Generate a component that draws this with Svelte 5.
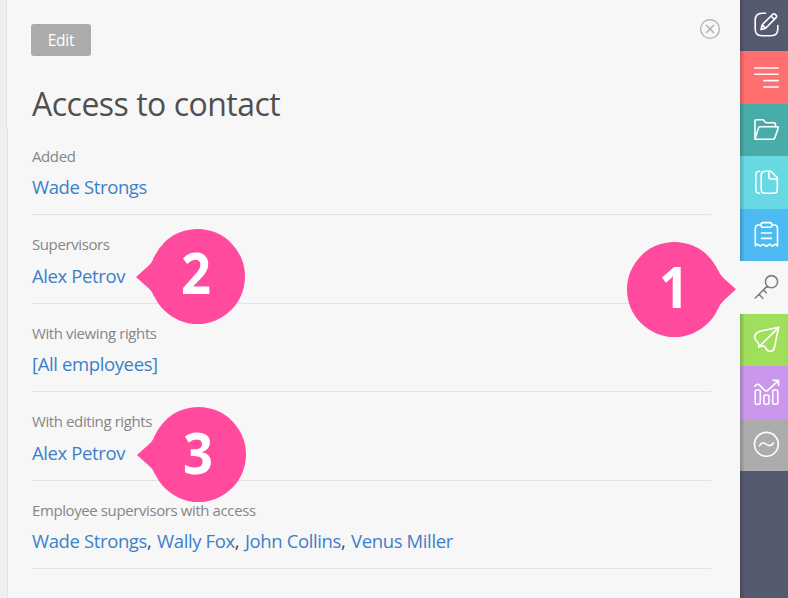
<script lang="ts">
  interface AccessRow {
    label: string;
    people: string[];
  }

  const rows: AccessRow[] = [
    { label: 'Added', people: ['Wade Strongs'] },
    { label: 'Supervisors', people: ['Alex Petrov'] },
    { label: 'With viewing rights', people: ['[All employees]'] },
    { label: 'With editing rights', people: ['Alex Petrov'] },
    {
      label: 'Employee supervisors with access',
      people: ['Wade Strongs', 'Wally Fox', 'John Collins', 'Venus Miller']
    }
  ];

  // Icon paths are drawn in a 48x52 tab
  const tabs = [
    {
      name: 'compose',
      paths: [
        'M25.5 13.2H22Q15.2 13.2 15.2 20V29Q15.2 35.7 22 35.7H31Q37.8 35.7 37.8 29V25.5',
        'M21 29.6 22.2 24.7 32.8 14.2Q34 13.2 35.3 14.4L36 15.1Q37.2 16.5 36.1 17.6L25.6 28.2ZM22.2 24.7 25.6 28.2M31 16 34.3 19.3'
      ]
    },
    { name: 'details', paths: ['M14.8 17H38.2M14.8 23.3H38.2M23.8 29.6H38.2M23.8 36H38.2'] },
    {
      name: 'folder',
      paths: [
        'M15 35V17.2Q15 15.8 16.4 15.8H22.5Q24 15.8 24.5 17.2T26.5 18.7H33.8Q35.5 18.7 35.5 20.4V22.8',
        'M15 35 18.5 24Q18.8 22.8 20 22.8H37.2Q38.6 22.8 38.2 24L34.8 34Q34.4 35.2 33.2 35.2H15.6Q15 35.2 15 34.6'
      ]
    },
    {
      name: 'copy',
      paths: [
        'M31 15.2H25Q21.2 15.2 21.2 19V33.5Q21.2 37.3 25 37.3H33.5Q37.3 37.3 37.3 33.5V21.5ZM28.8 15.2V20.5Q28.8 23 31.3 23H37',
        'M19.5 15.2Q15.8 15.4 15.8 19V33.5Q15.8 37 19.5 37.3'
      ]
    },
    {
      name: 'tasks',
      paths: [
        'M21 16H18Q15.3 16.3 15.3 19.2V36.8L17.4 35.2 20.2 37.2 23.2 35.2 26.4 37.2 29.6 35.2 32.6 37.2 35.4 35.2 37.5 36.8V19.2Q37.5 16.3 34.8 16H32',
        'M23.2 13.6H29.8Q32 13.6 32 15.9T29.8 18.3H23.2Q21 18.3 21 15.9T23.2 13.6ZM21.5 24H31.5M21.5 29.4H31.5'
      ]
    },
    {
      name: 'access',
      active: true,
      paths: [
        'M25.4 20.7A6.1 6.1 0 1 0 37.6 20.7A6.1 6.1 0 1 0 25.4 20.7M27.2 25.1 15.2 37M19 33.3 22.8 37.3M23.7 29 26.2 31.8'
      ]
    },
    {
      name: 'send',
      paths: [
        'M38.6 13.4 18.8 33V30.4Q18.8 29.2 17.4 28Q14.8 25.7 14.7 23.2Q14.6 20 18 18.2Q19.8 17 22 16.8Z',
        'M18.8 33 21.4 32.3Q25 31.4 26 34.2Q27.2 37.5 30.4 37.4Q33.5 37.3 34.4 33.5L38.6 13.4'
      ]
    },
    {
      name: 'reports',
      paths: [
        'M16.7 24H18.8Q20.3 24 20.3 25.5V36.8Q20.3 38.3 18.8 38.3H16.7Q15.2 38.3 15.2 36.8V25.5Q15.2 24 16.7 24Z',
        'M25.4 29H27.5Q29 29 29 30.5V36.8Q29 38.3 27.5 38.3H25.4Q23.9 38.3 23.9 36.8V30.5Q23.9 29 25.4 29Z',
        'M34.2 24H36.3Q37.8 24 37.8 25.5V36.8Q37.8 38.3 36.3 38.3H34.2Q32.7 38.3 32.7 36.8V25.5Q32.7 24 34.2 24Z',
        'M14.8 20.2Q17.2 17 19.5 19.2L24.8 24.3Q26.4 25.7 28 24.2L38.4 14.6M33.2 14.4H38.5V19.5'
      ]
    },
    {
      name: 'other',
      paths: [
        'M14.5 25.3A11.9 11.9 0 1 0 38.3 25.3A11.9 11.9 0 1 0 14.5 25.3M19.6 26.6Q22 22.2 26.4 25.3T33.4 24'
      ]
    }
  ];

  const callouts = [
    { id: 1, x: 47, y: 66 },
    { id: 2, x: 60, y: 65 },
    { id: 3, x: 61, y: 67 }
  ];
</script>

<div class="page">
  <div class="edge"></div>

  <main class="panel">
    <header class="toolbar">
      <button class="edit">Edit</button>
      <button class="close" aria-label="Close">
        <svg width="22" height="22" viewBox="0 0 22 22">
          <circle cx="11" cy="11" r="9.4" />
          <path d="M7 7 15 15M15 7 7 15" />
        </svg>
      </button>
    </header>

    <h1>Access to contact</h1>

    {#each rows as row}
      <section class="row">
        <div class="label">{row.label}</div>
        <div class="people">
          {#each row.people as person, i}{#if i > 0}{', '}{/if}<a href="#contact">{person}</a>{/each}
        </div>
      </section>
    {/each}
  </main>

  <nav class="rail">
    {#each tabs as tab}
      <div class="tab {tab.name}" class:active={tab.active}>
        <svg width="48" height="52" viewBox="0 0 48 52">
          {#each tab.paths as d}
            <path {d} />
          {/each}
        </svg>
      </div>
    {/each}
  </nav>

  {#each callouts as callout}
    <svg class="callout callout-{callout.id}" width="110" height="96" viewBox="0 0 110 96">
      {#if callout.id === 1}
        <path d="M109 47.3 97 36.5Q92.5 32.5 91 28V67Q92.5 62.5 97 58.2Z" />
        <circle cx="47.5" cy="47.5" r="47.5" />
      {:else}
        <path d="M0 48 12 37.2Q16.5 33.5 18 28V68Q16.5 62.5 12 58.8Z" />
        <circle cx="61.5" cy="47.5" r="47.5" />
      {/if}
      <text x={callout.x} y={callout.y} textLength="30" lengthAdjust="spacingAndGlyphs">{callout.id}</text>
    </svg>
  {/each}
</div>

<style>
  :global(body) {
    margin: 0;
    background: #f7f7f7;
  }

  .page {
    position: relative;
    display: grid;
    grid-template-columns: 8px 732px 48px;
    height: 598px;
    overflow: hidden;
    font-family: 'Open Sans', 'Noto Sans', sans-serif;
    background: #f7f7f7;
  }

  .edge {
    box-sizing: border-box;
    background: #efefef;
    border-right: 1px solid #e2e2e2;
  }

  /* the strip is one pixel narrower beside the heading */
  .edge::before {
    content: '';
    display: block;
    box-sizing: border-box;
    width: 8px;
    height: 128px;
    background: #efefef;
    border-right: 1px solid #f7f7f7;
    box-shadow: inset -1px 0 #e2e2e2;
  }

  .panel {
    padding: 18px 29px 0 24px;
  }

  .toolbar {
    display: flex;
    justify-content: space-between;
    align-items: flex-start;
    height: 62px;
    margin: 0 -10px 0 -1px;
  }

  button {
    padding: 0;
    border: 0;
    font-family: inherit;
  }

  .edit {
    width: 60px;
    height: 32px;
    margin-top: 6px;
    border-radius: 3px;
    background: #acacac;
    color: #fff;
    font-size: 15.5px;
    letter-spacing: -0.2px;
  }

  .close {
    height: 22px;
    background: none;
  }

  .close svg {
    display: block;
    fill: none;
    stroke: #aaa;
    stroke-width: 1.2;
  }

  h1 {
    height: 46.5px;
    margin: 0;
    color: #505050;
    font-size: 32px;
    font-weight: 400;
    line-height: 47px;
    letter-spacing: -0.5px;
    white-space: nowrap;
  }

  .row {
    box-sizing: border-box;
    height: 88.5px;
    padding-top: 19px;
    border-bottom: 1px solid #e3e3e3;
    white-space: nowrap;
  }

  .label {
    color: #868686;
    font-size: 15px;
    line-height: 20px;
    letter-spacing: -0.4px;
  }

  .people {
    margin-top: 8.6px;
    color: #444;
    font-size: 18.5px;
    line-height: 26px;
    letter-spacing: -0.38px;
    word-spacing: 1.3px;
  }

  a {
    color: #3d7fc9;
    text-decoration: none;
    word-spacing: 0;
  }

  .rail {
    display: grid;
    grid-template-rows: 51px 53px 52px 53px 52px 53px 52px 53px 52px 1fr;
    background: linear-gradient(to right, rgba(0, 0, 0, 0.18), transparent 5px) #555a6e;
  }

  .tab {
    overflow: hidden;
    background-image: linear-gradient(to right, rgba(0, 0, 0, 0.2), transparent 5px);
  }

  .tab svg {
    display: block;
    fill: none;
    stroke: #fff;
    stroke-width: 1.6;
    stroke-linecap: round;
    stroke-linejoin: round;
  }

  .compose {
    background-color: #555a6e;
  }

  .details {
    background-color: #ff6f6f;
  }

  .folder {
    background-color: #48aca8;
  }

  .copy {
    background-color: #68d9e3;
  }

  .tasks {
    background-color: #4dbaf2;
  }

  .send {
    background-color: #a0df5c;
  }

  .reports {
    background-color: #cb97ed;
  }

  .other {
    background-color: #acacac;
  }

  .tab.active {
    background: #f7f7f7;
  }

  .tab.active svg {
    stroke: #808080;
  }

  .callout {
    position: absolute;
    fill: #ff4a9e;
  }

  .callout text {
    fill: #fff;
    font-size: 58px;
    font-weight: 700;
    text-anchor: middle;
  }

  .callout-1 {
    left: 627px;
    top: 242px;
  }

  .callout-2 {
    left: 136px;
    top: 229px;
  }

  .callout-3 {
    left: 137px;
    top: 407px;
  }
</style>
